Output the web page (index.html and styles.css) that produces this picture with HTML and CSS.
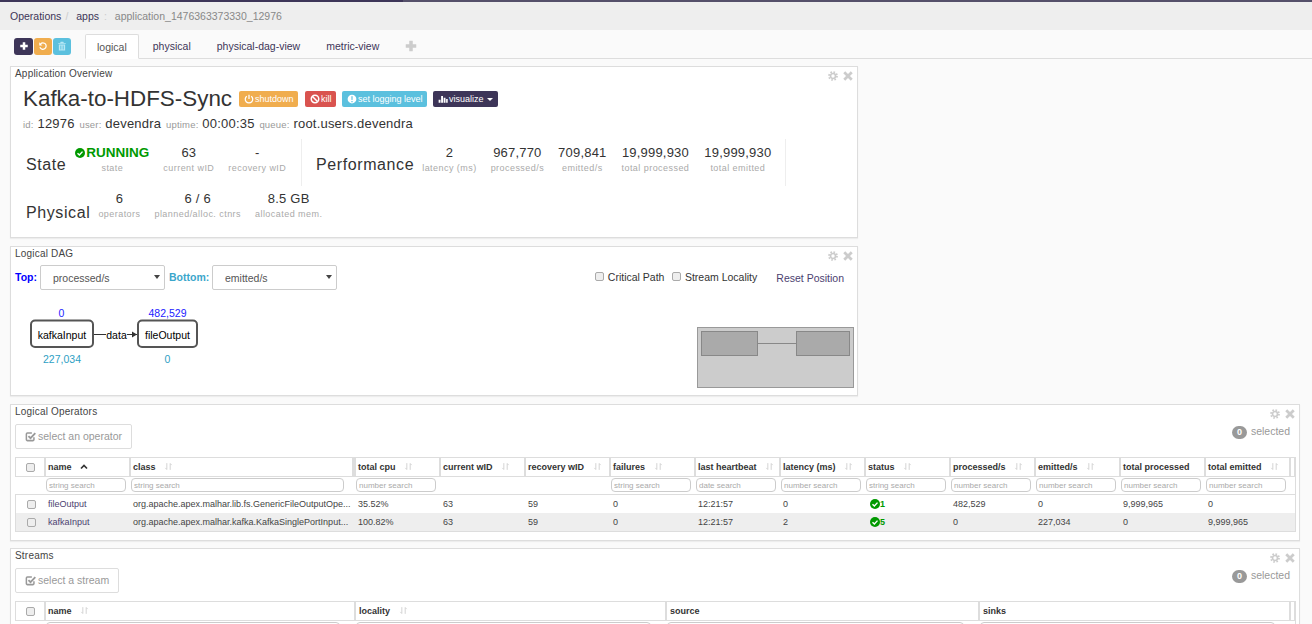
FILE: index.html
```html
<!DOCTYPE html>
<html lang="en">
	<head>
		<title>Kafka-to-HDFS-Sync</title>
		<link rel="stylesheet" href="styles.css">
	</head>
	<body>
		<svg class="defs" width="0" height="0">
			<symbol id="i-plus" viewBox="0 0 16 16"><path d="M6 2h4v4h4v4h-4v4H6v-4H2V6h4z" fill="currentColor"/></symbol>
			<symbol id="i-undo" viewBox="0 0 16 16"><path d="M4 4.5A5.2 5.2 0 1 1 3 10" fill="none" stroke="currentColor" stroke-width="2"/><path d="M2 2v5h5z" fill="currentColor"/></symbol>
			<symbol id="i-trash" viewBox="0 0 16 16"><path d="M6 1h4l1 2h3v1.500H2V3h3zM3 5.500h10V15H3zM5.200 7v6.500h1V7zM7.500 7v6.500h1V7zM9.800 7v6.500h1V7z" fill="currentColor" fill-rule="evenodd"/></symbol>
			<symbol id="i-power" viewBox="0 0 16 16"><path d="M4.500 3.500a6 6 0 1 0 7 0" fill="none" stroke="currentColor" stroke-width="2"/><path d="M8 1v7" stroke="currentColor" stroke-width="2"/></symbol>
			<symbol id="i-ban" viewBox="0 0 16 16"><circle cx="8" cy="8" r="6" fill="none" stroke="currentColor" stroke-width="2.400"/><path d="M4 4l8 8" stroke="currentColor" stroke-width="2.400"/></symbol>
			<symbol id="i-alert" viewBox="0 0 16 16"><path d="M8 1a7 7 0 1 0 0 14A7 7 0 0 0 8 1zM7 3.500h2L8.800 9.500H7.200zM7 11h2v2H7z" fill="currentColor" fill-rule="evenodd"/></symbol>
			<symbol id="i-bars" viewBox="0 0 16 16"><path d="M1 9h3v5H1zM5 3h3v11H5zM9 6h3v8H9zM13 8h2.500v6H13z" fill="currentColor"/></symbol>
			<symbol id="i-check" viewBox="0 0 16 16"><path d="M8 0a8 8 0 1 0 0 16A8 8 0 0 0 8 0z" fill="currentColor"/><path d="M4 8.300l3 3 5-5.500" fill="none" stroke="#fff" stroke-width="2.200"/></symbol>
			<symbol id="i-square" viewBox="0 0 16 16"><path d="M13 9v3.500a1.500 1.500 0 0 1-1.500 1.500h-8A1.500 1.500 0 0 1 2 12.500v-8A1.500 1.500 0 0 1 3.500 3H10" fill="none" stroke="currentColor" stroke-width="2.200"/><path d="M5 7.500l3 3 7-7.500" fill="none" stroke="currentColor" stroke-width="2.600"/></symbol>
			<symbol id="i-cog" viewBox="0 0 16 16"><circle cx="8" cy="8" r="6.300" fill="none" stroke="currentColor" stroke-width="3" stroke-dasharray="2.500 2.450"/><circle cx="8" cy="8" r="4" fill="none" stroke="currentColor" stroke-width="2.600"/></symbol>
			<symbol id="i-close" viewBox="0 0 16 16"><path d="M2 2l12 12M14 2L2 14" stroke="currentColor" stroke-width="4.500"/></symbol>
			<symbol id="i-sort" viewBox="0 0 16 16"><path d="M5 2v11M2.500 10.500L5 13.500M11 14V3M13.500 5.500L11 2.500" fill="none" stroke="currentColor" stroke-width="1.500"/></symbol>
			<symbol id="i-up" viewBox="0 0 16 16"><path d="M2 11l6-6 6 6" fill="none" stroke="currentColor" stroke-width="3.400"/></symbol>
		</svg>

		<div class="topline"></div>
		<nav class="crumbs">
			<a>Operations</a><span class="sep">/</span>
			<a class="apps">apps</a><span class="sep colon">:</span>
			<span class="current">application_1476363373330_12976</span>
		</nav>

		<div class="tabbar">
			<div class="tools">
				<button class="tool dark"><svg class="ic"><use href="#i-plus"/></svg></button>
				<button class="tool orange"><svg class="ic"><use href="#i-undo"/></svg></button>
				<button class="tool blue"><svg class="ic"><use href="#i-trash"/></svg></button>
			</div>
			<ul class="tabs">
				<li class="tab active">logical</li>
				<li class="tab">physical</li>
				<li class="tab">physical-dag-view</li>
				<li class="tab">metric-view</li>
				<li class="tab add"><svg class="ic"><use href="#i-plus"/></svg></li>
			</ul>
		</div>

		<section class="panel overview">
			<div class="panel-title">Application Overview</div>
			<div class="panel-tools"><svg class="ic"><use href="#i-cog"/></svg><svg class="ic"><use href="#i-close"/></svg></div>
			<div class="headline">
				<h1>Kafka-to-HDFS-Sync</h1>
				<button class="btn orange"><svg class="ic"><use href="#i-power"/></svg>shutdown</button>
				<button class="btn red"><svg class="ic"><use href="#i-ban"/></svg>kill</button>
				<button class="btn blue"><svg class="ic"><use href="#i-alert"/></svg>set logging level</button>
				<button class="btn dark"><svg class="ic"><use href="#i-bars"/></svg>visualize<span class="caret"></span></button>
			</div>
			<div class="meta">
				<small>id:</small> <b>12976</b> <small>user:</small> <b>devendra</b> <small>uptime:</small> <b>00:00:35</b> <small>queue:</small> <b>root.users.devendra</b>
			</div>
			<div class="stat-row">
				<div class="stat-group state">
					<div class="stat-name">State</div>
					<div class="stat"><div class="val running"><svg class="ic"><use href="#i-check"/></svg>RUNNING</div><div class="lbl">state</div></div>
					<div class="stat"><div class="val">63</div><div class="lbl">current wID</div></div>
					<div class="stat"><div class="val">-</div><div class="lbl">recovery wID</div></div>
				</div>
				<div class="stat-group perf">
					<div class="stat-name">Performance</div>
					<div class="stat"><div class="val">2</div><div class="lbl">latency (ms)</div></div>
					<div class="stat"><div class="val">967,770</div><div class="lbl">processed/s</div></div>
					<div class="stat"><div class="val">709,841</div><div class="lbl">emitted/s</div></div>
					<div class="stat far"><div class="val">19,999,930</div><div class="lbl">total processed</div></div>
					<div class="stat far"><div class="val">19,999,930</div><div class="lbl">total emitted</div></div>
				</div>
			</div>
			<div class="stat-row second">
				<div class="stat-group phys">
					<div class="stat-name">Physical</div>
					<div class="stat"><div class="val">6</div><div class="lbl">operators</div></div>
					<div class="stat"><div class="val">6 / 6</div><div class="lbl">planned/alloc. ctnrs</div></div>
					<div class="stat"><div class="val">8.5 GB</div><div class="lbl">allocated mem.</div></div>
				</div>
			</div>
		</section>

		<section class="panel dag">
			<div class="panel-title">Logical DAG</div>
			<div class="panel-tools"><svg class="ic"><use href="#i-cog"/></svg><svg class="ic"><use href="#i-close"/></svg></div>
			<div class="dag-controls">
				<label class="pick top">Top:</label>
				<div class="select-wrap"><select><option>processed/s</option></select></div>
				<label class="pick bottom">Bottom:</label>
				<div class="select-wrap"><select><option>emitted/s</option></select></div>
				<div class="dag-options">
					<label class="opt"><input type="checkbox" class="cb">Critical Path</label>
					<label class="opt"><input type="checkbox" class="cb">Stream Locality</label>
					<a class="reset">Reset Position</a>
				</div>
			</div>
			<svg class="dag-canvas" width="846" height="105" viewBox="0 0 846 105">
				<path class="edge" d="M83 44.500h43"/>
				<path class="arrow" d="M126 44.500l-5-3v6z"/>
				<rect class="data-bg" x="95" y="38" width="21" height="13"/>
				<g class="node">
					<rect x="20" y="30.500" width="62" height="26.500" rx="4"/>
					<rect x="127" y="30.500" width="59" height="26.500" rx="4"/>
				</g>
				<text class="node-text" x="51" y="48.500">kafkaInput</text>
				<text class="node-text" x="156.500" y="48.500">fileOutput</text>
				<text class="node-text" x="105.500" y="48.500">data</text>
				<text class="top-val" x="50.500" y="27">0</text>
				<text class="top-val" x="156.500" y="27">482,529</text>
				<text class="bot-val" x="51" y="73">227,034</text>
				<text class="bot-val" x="156.500" y="73">0</text>
				<g class="mini">
					<rect class="mini-bg" x="686.500" y="37.500" width="156" height="60"/>
					<rect class="mini-node" x="690.500" y="41.500" width="56" height="24"/>
					<rect class="mini-node" x="785.500" y="41.500" width="53" height="24"/>
					<path class="mini-edge" d="M747 53.500h38"/>
				</g>
			</svg>
		</section>

		<section class="panel wide ops">
			<div class="panel-title">Logical Operators</div>
			<div class="panel-tools"><svg class="ic"><use href="#i-cog"/></svg><svg class="ic"><use href="#i-close"/></svg></div>
			<div class="table-top">
				<button class="select-btn"><svg class="ic"><use href="#i-square"/></svg>select an operator</button>
				<div class="selected"><span class="badge">0</span>selected</div>
			</div>
			<table class="grid">
				<colgroup>
					<col class="c-chk"><col class="c-name"><col class="c-class">
					<col class="c-n"><col class="c-n"><col class="c-n"><col class="c-n"><col class="c-n"><col class="c-n"><col class="c-n"><col class="c-n"><col class="c-n"><col class="c-n"><col class="c-n">
					<col class="c-end">
				</colgroup>
				<thead>
					<tr>
						<th class="chk"><input type="checkbox" class="cb"></th>
						<th>name <svg class="ic up"><use href="#i-up"/></svg></th>
						<th class="grip">class <svg class="ic sort"><use href="#i-sort"/></svg></th>
						<th>total cpu <svg class="ic sort"><use href="#i-sort"/></svg></th>
						<th>current wID <svg class="ic sort"><use href="#i-sort"/></svg></th>
						<th>recovery wID <svg class="ic sort"><use href="#i-sort"/></svg></th>
						<th>failures <svg class="ic sort"><use href="#i-sort"/></svg></th>
						<th>last heartbeat <svg class="ic sort"><use href="#i-sort"/></svg></th>
						<th>latency (ms) <svg class="ic sort"><use href="#i-sort"/></svg></th>
						<th>status <svg class="ic sort"><use href="#i-sort"/></svg></th>
						<th>processed/s <svg class="ic sort"><use href="#i-sort"/></svg></th>
						<th>emitted/s <svg class="ic sort"><use href="#i-sort"/></svg></th>
						<th>total processed</th>
						<th>total emitted <svg class="ic sort"><use href="#i-sort"/></svg></th>
						<th></th>
					</tr>
					<tr class="filters">
						<th></th>
						<th><input placeholder="string search"></th>
						<th><input class="long" placeholder="string search"></th>
						<th><input placeholder="number search"></th>
						<th></th>
						<th></th>
						<th><input placeholder="string search"></th>
						<th><input placeholder="date search"></th>
						<th><input placeholder="number search"></th>
						<th><input placeholder="string search"></th>
						<th><input placeholder="number search"></th>
						<th><input placeholder="number search"></th>
						<th><input placeholder="number search"></th>
						<th><input placeholder="number search"></th>
						<th></th>
					</tr>
				</thead>
				<tbody>
					<tr>
						<td class="chk"><input type="checkbox" class="cb"></td>
						<td class="link">fileOutput</td>
						<td>org.apache.apex.malhar.lib.fs.GenericFileOutputOpe...</td>
						<td>35.52%</td><td>63</td><td>59</td><td>0</td><td>12:21:57</td><td>0</td>
						<td class="ok"><svg class="ic"><use href="#i-check"/></svg>1</td>
						<td>482,529</td><td>0</td><td>9,999,965</td><td>0</td><td></td>
					</tr>
					<tr class="odd">
						<td class="chk"><input type="checkbox" class="cb"></td>
						<td class="link">kafkaInput</td>
						<td>org.apache.apex.malhar.kafka.KafkaSinglePortInput...</td>
						<td>100.82%</td><td>63</td><td>59</td><td>0</td><td>12:21:57</td><td>2</td>
						<td class="ok"><svg class="ic"><use href="#i-check"/></svg>5</td>
						<td>0</td><td>227,034</td><td>0</td><td>9,999,965</td><td></td>
					</tr>
				</tbody>
			</table>
		</section>

		<section class="panel wide streams">
			<div class="panel-title">Streams</div>
			<div class="panel-tools"><svg class="ic"><use href="#i-cog"/></svg><svg class="ic"><use href="#i-close"/></svg></div>
			<div class="table-top">
				<button class="select-btn"><svg class="ic"><use href="#i-square"/></svg>select a stream</button>
				<div class="selected"><span class="badge">0</span>selected</div>
			</div>
			<table class="grid stream-grid">
				<colgroup>
					<col class="c-chk"><col class="s-name"><col class="s-loc"><col class="s-src"><col class="s-sink"><col class="c-end">
				</colgroup>
				<thead>
					<tr>
						<th class="chk"><input type="checkbox" class="cb"></th>
						<th>name <svg class="ic sort"><use href="#i-sort"/></svg></th>
						<th class="pad">locality <svg class="ic sort"><use href="#i-sort"/></svg></th>
						<th class="pad">source</th>
						<th class="pad">sinks</th>
						<th></th>
					</tr>
					<tr class="filters">
						<th></th>
						<th><input></th>
						<th><input></th>
						<th><input></th>
						<th><input></th>
						<th></th>
					</tr>
				</thead>
			</table>
		</section>
	</body>
</html>
```

FILE: styles.css
```css
* {
	box-sizing: border-box;
}
html, body {
	height: 624px;
	overflow: hidden;
}
body {
	margin: 0;
	background: #fafafa;
	font-family: "Liberation Sans", Arial, sans-serif;
	font-size: 10.500px;
	color: #333;
}
.defs {
	position: absolute;
}
.ic {
	display: inline-block;
	width: 10px;
	height: 10px;
	vertical-align: -1px;
}
button {
	font-family: inherit;
	border: none;
	padding: 0;
}

.topline {
	height: 2px;
	background: linear-gradient(to right, #3d3558 0, #3d3558 403px, #55506a 403px);
}
.crumbs {
	height: 28px;
	padding-left: 10px;
	background: #eee;
	font-size: 10.500px;
	line-height: 29px;
	color: #3d3558;
	white-space: nowrap;
}
.crumbs .sep {
	color: #ccc;
	margin: 0 5px 0 4px;
}
.crumbs .colon {
	margin: 0 5px 0 5px;
}
.crumbs .current {
	color: #888;
}

.tabbar {
	display: flex;
	height: 29px;
	padding: 4px 0 0 14px;
}
.tools {
	display: flex;
	gap: 1px;
	padding-top: 4px;
	width: 71px;
}
.tool {
	width: 18px;
	height: 17px;
	border-radius: 3px;
	color: #fff;
}
.tool .ic {
	vertical-align: 0;
}
.tool.dark { background: #3d3558; width: 19px; }
.tool.orange { background: #f0ad4e; }
.tool.blue { background: #5bc0de; }
.tool.blue .ic { color: #b9e8f5; }
.tabs {
	display: flex;
	flex: 1;
	list-style: none;
	margin: 0;
	padding: 0;
	border-bottom: 1px solid #ddd;
	height: 25px;
}
.tab {
	height: 25px;
	padding: 0 13px;
	line-height: 25px;
	color: #3d3558;
}
.tab.active {
	background: #fff;
	border: 1px solid #ddd;
	border-bottom-color: #fff;
	border-radius: 2px 2px 0 0;
	padding: 0 11px;
	color: #555;
	margin-right: 1px;
}
.tab.add {
	color: #ccc;
	font-size: 12px;
	padding-left: 12px;
}
.tab.add .ic {
	width: 14px;
	height: 14px;
	vertical-align: -3px;
}

.panel {
	position: relative;
	background: #fff;
	border: 1px solid #ddd;
	box-shadow: 0 1px 1px rgba(0, 0, 0, .05);
	width: 848px;
	margin: 8px 0 0 10px;
	padding: 1px 4px 0;
}
.overview {
	margin-top: 7px;
	height: 172px;
}
.dag {
	height: 150px;
}
.wide {
	width: 1290px;
}
.ops {
	height: 137px;
}
.streams {
	margin-top: 7px;
	height: 100px;
}
.panel-title {
	font-size: 10px;
	line-height: 12px;
	letter-spacing: .2px;
	color: #444;
}
.panel-tools {
	position: absolute;
	top: 4px;
	right: 4px;
	display: flex;
	gap: 5px;
	color: #ccc;
}

.headline {
	display: flex;
	align-items: center;
	height: 30px;
	margin: 4px 0 0 8px;
}
h1 {
	margin: 0 7px 0 0;
	font-size: 22.400px;
	font-weight: normal;
	color: #333;
}
.btn {
	display: flex;
	align-items: center;
	gap: 1.500px;
	height: 16px;
	padding: 0 4.500px;
	margin-right: 6px;
	border-radius: 2px;
	font-size: 9px;
	color: #fff;
}
.btn.orange { background: #f0ad4e; margin-right: 7px; }
.btn.red { background: #d9534f; }
.btn.blue { background: #5bc0de; }
.btn.dark { background: #3d3558; }
.caret {
	width: 0;
	height: 0;
	margin-left: 2px;
	border: 3px solid transparent;
	border-top-color: #fff;
	border-bottom: none;
}
.meta {
	margin: 2px 0 0 8px;
	font-size: 13px;
	line-height: 16px;
	color: #333;
	letter-spacing: .2px;
}
.meta b {
	font-weight: normal;
	margin-right: 1px;
}
.meta small {
	font-size: 9.500px;
	color: #999;
}

.stat-row {
	display: flex;
	margin: 6px 0 0 11px;
}
.stat-row.second {
	margin-top: 3px;
}
.stat-group {
	display: flex;
	align-items: center;
	gap: 14px;
	height: 47px;
	border-right: 1px solid #eee;
}
.stat-group.state {
	width: 276px;
}
.stat-group.perf {
	width: 484px;
	padding-left: 14px;
}
.stat-group.phys {
	border: none;
	height: 40px;
}
.stat-name {
	font-size: 16px;
	letter-spacing: .6px;
	color: #333;
	margin-top: 4px;
}
.perf .stat-name {
	margin-right: -6px;
}
.phys .stat-name {
	margin-right: -6px;
	margin-top: 8px;
}
.state .stat-name {
	margin-right: -5px;
}
.stat {
	margin-bottom: 6px;
	text-align: center;
	white-space: nowrap;
}
.stat.far {
	margin-left: 1px;
}
.val {
	font-size: 13px;
	line-height: 16px;
	margin-bottom: 1px;
	letter-spacing: .2px;
	color: #333;
}
.lbl {
	font-size: 9px;
	line-height: 13px;
	letter-spacing: .45px;
	color: #aaa;
}
.val.running {
	font-size: 13.500px;
	font-weight: bold;
	color: #090;
	letter-spacing: 0;
}
.val.running .ic {
	margin-right: 1px;
}

.dag-controls {
	display: flex;
	align-items: center;
	margin-top: 5px;
	height: 25px;
}
.pick {
	font-weight: bold;
	margin-top: -2px;
}
.pick.top {
	color: #00f;
	width: 25px;
}
.pick.bottom {
	color: #3ba6cb;
	margin-left: 4px;
	width: 43px;
}
.select-wrap {
	position: relative;
	width: 125px;
	height: 25px;
}
.select-wrap::after {
	content: "";
	position: absolute;
	right: 5px;
	top: 10px;
	border: 3px solid transparent;
	border-top: 4px solid #444;
	border-bottom: none;
}
select {
	appearance: none;
	width: 100%;
	height: 100%;
	padding: 0 12px;
	border: 1px solid #ccc;
	border-radius: 2px;
	background: #fff;
	font-family: inherit;
	font-size: 10.500px;
	color: #555;
}
.dag-options {
	display: flex;
	align-items: center;
	margin-left: auto;
	margin-right: 9px;
	margin-top: -2px;
}
.opt {
	display: flex;
	align-items: center;
	gap: 3.500px;
	margin-right: 8px;
	color: #333;
}
.reset {
	margin-left: 11px;
	margin-top: 2px;
	color: #4b4170;
}
.cb {
	appearance: none;
	width: 9px;
	height: 9px;
	margin: 0;
	border: 1px solid #aaa;
	border-radius: 2px;
	background: #eee;
	vertical-align: middle;
}
.dag-canvas {
	display: block;
	margin: 0 0 0 -4px;
}
.dag-canvas text {
	font-size: 10.500px;
	text-anchor: middle;
}
.node rect {
	fill: #fff;
	stroke: #555;
	stroke-width: 2;
}
.edge {
	stroke: #333;
	fill: none;
}
.arrow {
	fill: #333;
}
.data-bg {
	fill: #fff;
}
.node-text {
	fill: #000;
}
.top-val {
	fill: #22f;
}
.bot-val {
	fill: #2e9fc4;
}
.mini-bg {
	fill: #ccc;
	stroke: #999;
}
.mini-node {
	fill: #aaa;
	stroke: #888;
}
.mini-edge {
	stroke: #888;
	fill: none;
}

.table-top {
	display: flex;
	justify-content: space-between;
	margin-top: 6px;
	height: 33px;
}
.select-btn {
	height: 25px;
	padding: 0 9px 2px;
	background: #fff;
	border: 1px solid #ddd;
	border-radius: 2px;
	font-size: 10.500px;
	color: #999;
}
.select-btn .ic {
	margin-right: 2px;
	vertical-align: -2px;
	width: 11px;
	height: 11px;
}
.selected {
	font-size: 10.500px;
	color: #999;
	margin: 1px 5px 0 0;
}
.badge {
	display: inline-block;
	width: 15px;
	height: 13px;
	margin-right: 4px;
	border-radius: 7px;
	background: #999;
	color: #fff;
	font-size: 9px;
	font-weight: bold;
	line-height: 13px;
	text-align: center;
}

.grid {
	table-layout: fixed;
	width: 1280px;
	border-collapse: separate;
	border-spacing: 0;
	border: 1px solid #ddd;
	border-width: 1px 1px 1px 0;
	font-size: 9px;
}
.c-chk { width: 30px; }
.c-name { width: 85px; }
.c-class { width: 225px; }
.c-n { width: 85px; }
.c-end { width: 5px; }
.s-name { width: 310px; }
.s-loc { width: 311px; }
.s-src { width: 313px; }
.s-sink { width: 311px; }
.grid th, .grid td {
	padding: 0 3px;
	text-align: left;
	white-space: nowrap;
	overflow: hidden;
}
.grid thead tr:first-child th {
	height: 19px;
	padding: 0 2px;
	font-size: 9px;
	font-weight: bold;
	color: #333;
	border-left: 1px solid #ddd;
	border-right: 1px solid #ddd;
	border-bottom: 1px solid #ddd;
}
.grid thead tr:first-child th.grip {
	border-right: 3px solid #ddd;
}
.grid thead tr:first-child th.pad {
	padding-left: 3px;
}
.grid .ic.sort {
	width: 9px;
	height: 9px;
	margin-left: 6px;
	color: #ccc;
}
.grid .ic.up {
	width: 8px;
	height: 8px;
	margin-left: 6px;
	color: #333;
}
.grid thead tr:first-child th.chk, .grid .chk {
	text-align: center;
	padding: 0 0 0 1px;
	border-left: 1px solid #ddd;
}
.grid .filters th {
	height: 18px;
	border-bottom: 1px solid #ddd;
	padding: 0 0 1px 1px;
}
.filters input {
	display: block;
	width: 80px;
	height: 14px;
	padding: 0 2px;
	border: 1px solid #ccc;
	border-radius: 4px;
	font-family: inherit;
	font-size: 8px;
}
.filters input.long {
	width: 213px;
}
.stream-grid .filters input {
	width: calc(100% - 15px);
}
.filters input::placeholder {
	color: #aaa;
}
.grid td {
	height: 18px;
	color: #444;
}
.grid tbody tr.odd td {
	background: #eee;
}
.grid td.link {
	color: #4b4170;
}
.grid td.ok {
	padding-left: 5px;
	font-weight: bold;
	color: #090;
}
.grid td.ok .ic {
	vertical-align: -2px;
}
```
